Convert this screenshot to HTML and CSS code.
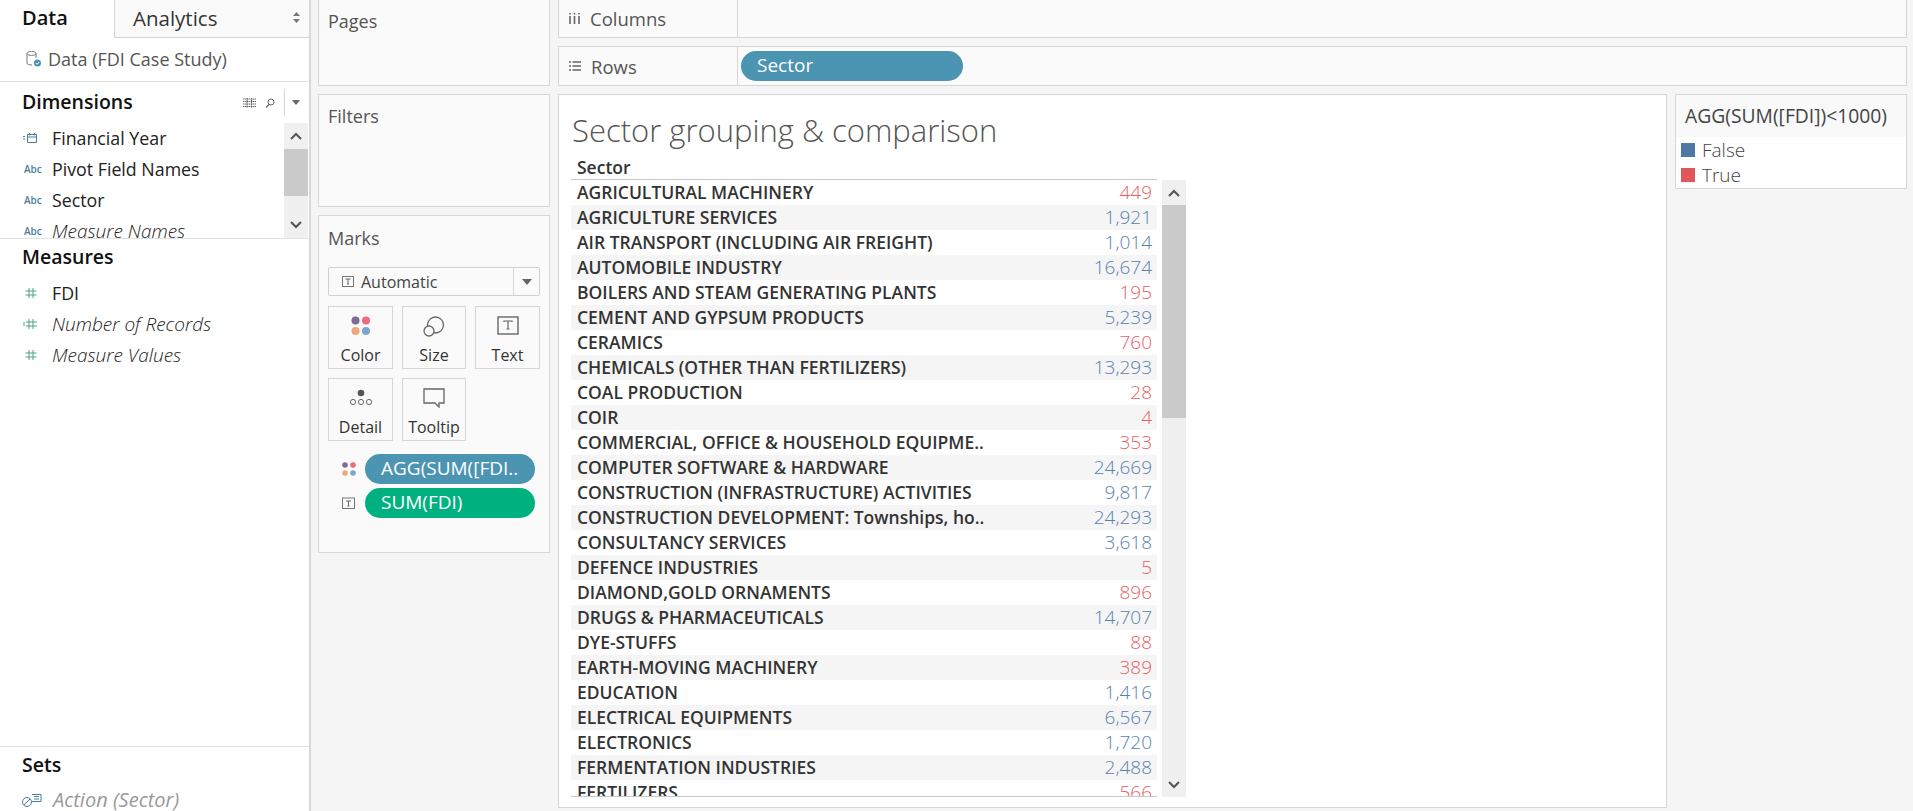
FILE: index.html
```html
<!DOCTYPE html>
<html lang="en">

<head>
    <meta charset="UTF-8">
    <title>Sector grouping &amp; comparison</title>
    <link rel="stylesheet" href="styles.css">
</head>

<body>
    <aside class="sidebar">
        <div class="tabs">
            <div class="tab tab-active">Data</div>
            <div class="tab tab-other">Analytics
                <svg class="tab-arrows" width="7" height="11" viewBox="0 0 7 11"><path d="M3.5 0L7 4H0zM3.5 11L0 7h7z" fill="#777"/></svg>
            </div>
        </div>
        <div class="source">
            <svg width="16" height="18" viewBox="0 0 16 18"><path d="M1 3.5C1 .8 10 .8 10 3.5V8M1 3.5C1 6 10 6 10 3.5M1 3.5V13c0 1.4 2 2 5 2" fill="none" stroke="#777"/><circle cx="11.5" cy="13" r="3.5" fill="#4b93b3"/><path d="M9.800 13l1.300 1.300 2.200-2.400" fill="none" stroke="#fff"/></svg>
            <span>Data (FDI Case Study)</span>
        </div>

        <section class="fields dims">
            <h2>Dimensions</h2>
            <div class="dim-tools">
                <svg width="13" height="10" viewBox="0 0 13 10"><path d="M0 1h13M0 3.5h13M0 6h13M0 8.500h13M4 0v10M8.500 0v10" stroke="#666" stroke-dasharray="1.500 .5"/></svg>
                <svg width="10" height="10" viewBox="0 0 10 10"><circle cx="6" cy="4" r="3" fill="none" stroke="#666"/><path d="M4 6.500L1 9.500" stroke="#666" stroke-width="1.300"/></svg>
                <span class="tools-sep"></span>
                <svg width="8" height="5" viewBox="0 0 8 5"><path d="M0 0h8L4 5z" fill="#666"/></svg>
            </div>
            <div class="field"><svg class="field-icon" width="16" height="12" viewBox="0 0 16 12"><path d="M0 4.500h2M0 7h2M4.500 2.500h9v8h-9zM4.500 5h9M6.500 1v2.500M11.500 1v2.500" fill="none" stroke="#4b7f99"/></svg>Financial Year</div>
            <div class="field"><span class="abc">Abc</span>Pivot Field Names</div>
            <div class="field"><span class="abc">Abc</span>Sector</div>
            <div class="field field-calc"><span class="abc">Abc</span>Measure Names</div>
            <div class="scroll scroll-dims">
                <div class="scroll-btn"><svg width="12" height="8" viewBox="0 0 12 8"><path d="M1 7l5-5 5 5" fill="none" stroke="#555" stroke-width="2"/></svg></div>
                <div class="thumb"></div>
                <div class="scroll-fill"></div>
                <div class="scroll-btn"><svg width="12" height="8" viewBox="0 0 12 8"><path d="M1 1l5 5 5-5" fill="none" stroke="#555" stroke-width="2"/></svg></div>
            </div>
        </section>

        <section class="fields measures">
            <h2>Measures</h2>
            <div class="field"><svg class="field-icon" width="16" height="12" viewBox="0 0 16 12"><path d="M6 1v10M10 1v10M2.500 4h11M2.500 8h11" stroke="#4ca585"/></svg>FDI</div>
            <div class="field field-calc"><svg class="field-icon" width="16" height="12" viewBox="0 0 16 12"><path d="M0 5h2M0 7h2M6 1v10M10 1v10M3 4h11M3 8h11" stroke="#4ca585"/></svg>Number of Records</div>
            <div class="field field-calc"><svg class="field-icon" width="16" height="12" viewBox="0 0 16 12"><path d="M6 1v10M10 1v10M2.500 4h11M2.500 8h11" stroke="#4ca585"/></svg>Measure Values</div>
        </section>

        <section class="fields sets">
            <h2>Sets</h2>
            <div class="field field-calc field-muted"><svg class="field-icon" width="20" height="14" viewBox="0 0 20 14"><circle cx="5" cy="9" r="4.500" fill="none" stroke="#4b7f99"/><path d="M2 12l6-6M10 1.500h9v7h-9M12 3.500h5M12 6h5" fill="none" stroke="#4b7f99"/></svg>Action (Sector)</div>
        </section>
    </aside>

    <div class="cards">
        <div class="card pages"><div class="card-title">Pages</div></div>
        <div class="card filters"><div class="card-title">Filters</div></div>
        <div class="card marks">
            <div class="card-title">Marks</div>
            <div class="mark-select">
                <svg class="t-icon" width="13" height="13" viewBox="0 0 13 13"><rect x=".5" y="1.500" width="11" height="10" fill="none" stroke="#777"/><path d="M3.500 4h5M6 4v5M5 9h2" stroke="#666" fill="none"/></svg>
                <span>Automatic</span>
                <div class="mark-arrow"><svg width="10" height="6" viewBox="0 0 10 6"><path d="M0 0h10L5 6z" fill="#666"/></svg></div>
            </div>
            <div class="mark-buttons">
                <div class="mark-btn">
                    <svg width="20" height="20" viewBox="0 0 20 20"><circle cx="4.500" cy="4.500" r="4" fill="#7f6a96"/><circle cx="15" cy="4.500" r="4" fill="#ee6b7b"/><circle cx="4.500" cy="15" r="4" fill="#f2a67c"/><circle cx="15" cy="15" r="4" fill="#7fa5cf"/></svg>
                    <span>Color</span>
                </div>
                <div class="mark-btn">
                    <svg width="22" height="21" viewBox="0 0 22 21"><circle cx="12.500" cy="9" r="8" fill="none" stroke="#666" stroke-width="1.300"/><circle cx="6" cy="15" r="5" fill="#fafafa" stroke="#666" stroke-width="1.300"/></svg>
                    <span>Size</span>
                </div>
                <div class="mark-btn">
                    <svg width="22" height="19" viewBox="0 0 22 19"><rect x="1" y="1" width="20" height="17" fill="none" stroke="#666" stroke-width="1.400"/><path d="M7 6V5h8v1M11 5v8M9.500 13h3" fill="none" stroke="#666" stroke-width="1.200"/></svg>
                    <span>Text</span>
                </div>
                <div class="mark-btn">
                    <svg width="24" height="20" viewBox="0 0 24 20"><circle cx="12" cy="5" r="3.300" fill="#555"/><circle cx="4" cy="14" r="2.600" fill="none" stroke="#666"/><circle cx="12" cy="14" r="2.600" fill="none" stroke="#666"/><circle cx="20" cy="14" r="2.600" fill="none" stroke="#666"/></svg>
                    <span>Detail</span>
                </div>
                <div class="mark-btn">
                    <svg width="22" height="20" viewBox="0 0 22 20"><path d="M1 1h20v14h-5v4l-4-4H1z" fill="none" stroke="#666" stroke-width="1.300"/></svg>
                    <span>Tooltip</span>
                </div>
            </div>
            <div class="mark-pill">
                <svg width="14" height="14" viewBox="0 0 14 14"><circle cx="3" cy="3" r="2.800" fill="#7f6a96"/><circle cx="11" cy="3" r="2.800" fill="#ee6b7b"/><circle cx="3" cy="11" r="2.800" fill="#f2a67c"/><circle cx="11" cy="11" r="2.800" fill="#7fa5cf"/></svg>
                <div class="pill pill-blue">AGG(SUM([FDI..</div>
            </div>
            <div class="mark-pill">
                <svg width="14" height="13" viewBox="0 0 14 13"><rect x=".5" y="1" width="12" height="10.500" fill="none" stroke="#777"/><path d="M4 4h5M6.500 4v5M5.500 9h2" stroke="#666" fill="none"/></svg>
                <div class="pill pill-green">SUM(FDI)</div>
            </div>
        </div>
    </div>

    <main class="main">
        <div class="shelf shelf-cols">
            <div class="shelf-label">
                <svg width="11" height="11" viewBox="0 0 11 11"><path d="M1 3v8M5.500 3v8M10 3v8M1 0v1.500M5.500 0v1.500M10 0v1.500" stroke="#666" stroke-width="1.600"/></svg>
                Columns
            </div>
        </div>
        <div class="shelf shelf-rows">
            <div class="shelf-label">
                <svg width="12" height="10" viewBox="0 0 12 10"><path d="M0 1h2M0 5h2M0 9h2M3.500 1H12M3.500 5H12M3.500 9H12" stroke="#666" stroke-width="1.400"/></svg>
                Rows
            </div>
            <div class="pill pill-blue pill-rows">Sector</div>
        </div>

        <div class="view-row">
            <div class="viz">
                <div class="viz-title">Sector grouping &amp; comparison</div>
                <div class="table-wrap">
                    <div class="table">
                        <div class="table-head">Sector</div>
                        <div class="table-body">
                            <div class="row"><span>AGRICULTURAL MACHINERY</span><span class="val val-true">449</span></div>
                            <div class="row"><span>AGRICULTURE SERVICES</span><span class="val">1,921</span></div>
                            <div class="row"><span>AIR TRANSPORT (INCLUDING AIR FREIGHT)</span><span class="val">1,014</span></div>
                            <div class="row"><span>AUTOMOBILE INDUSTRY</span><span class="val">16,674</span></div>
                            <div class="row"><span>BOILERS AND STEAM GENERATING PLANTS</span><span class="val val-true">195</span></div>
                            <div class="row"><span>CEMENT AND GYPSUM PRODUCTS</span><span class="val">5,239</span></div>
                            <div class="row"><span>CERAMICS</span><span class="val val-true">760</span></div>
                            <div class="row"><span>CHEMICALS (OTHER THAN FERTILIZERS)</span><span class="val">13,293</span></div>
                            <div class="row"><span>COAL PRODUCTION</span><span class="val val-true">28</span></div>
                            <div class="row"><span>COIR</span><span class="val val-true">4</span></div>
                            <div class="row"><span>COMMERCIAL, OFFICE &amp; HOUSEHOLD EQUIPME..</span><span class="val val-true">353</span></div>
                            <div class="row"><span>COMPUTER SOFTWARE &amp; HARDWARE</span><span class="val">24,669</span></div>
                            <div class="row"><span>CONSTRUCTION (INFRASTRUCTURE) ACTIVITIES</span><span class="val">9,817</span></div>
                            <div class="row"><span>CONSTRUCTION DEVELOPMENT: Townships, ho..</span><span class="val">24,293</span></div>
                            <div class="row"><span>CONSULTANCY SERVICES</span><span class="val">3,618</span></div>
                            <div class="row"><span>DEFENCE INDUSTRIES</span><span class="val val-true">5</span></div>
                            <div class="row"><span>DIAMOND,GOLD ORNAMENTS</span><span class="val val-true">896</span></div>
                            <div class="row"><span>DRUGS &amp; PHARMACEUTICALS</span><span class="val">14,707</span></div>
                            <div class="row"><span>DYE-STUFFS</span><span class="val val-true">88</span></div>
                            <div class="row"><span>EARTH-MOVING MACHINERY</span><span class="val val-true">389</span></div>
                            <div class="row"><span>EDUCATION</span><span class="val">1,416</span></div>
                            <div class="row"><span>ELECTRICAL EQUIPMENTS</span><span class="val">6,567</span></div>
                            <div class="row"><span>ELECTRONICS</span><span class="val">1,720</span></div>
                            <div class="row"><span>FERMENTATION INDUSTRIES</span><span class="val">2,488</span></div>
                            <div class="row"><span>FERTILIZERS</span><span class="val val-true">566</span></div>
                        </div>
                    </div>
                    <div class="scroll scroll-table">
                        <div class="scroll-btn"><svg width="12" height="8" viewBox="0 0 12 8"><path d="M1 7l5-5 5 5" fill="none" stroke="#555" stroke-width="2"/></svg></div>
                        <div class="thumb"></div>
                        <div class="scroll-fill"></div>
                        <div class="scroll-btn"><svg width="12" height="8" viewBox="0 0 12 8"><path d="M1 1l5 5 5-5" fill="none" stroke="#555" stroke-width="2"/></svg></div>
                    </div>
                </div>
            </div>

            <div class="legend">
                <div class="legend-title">AGG(SUM([FDI])&lt;1000)</div>
                <div class="legend-item"><span class="swatch swatch-false"></span>False</div>
                <div class="legend-item"><span class="swatch swatch-true"></span>True</div>
            </div>
        </div>
    </main>
</body>

</html>
```
FILE: styles.css
```css
* {
    box-sizing: border-box;
}

html,
body {
    height: 811px;
}

body {
    margin: 0;
    display: flex;
    overflow: hidden;
    font-family: "Open Sans", "Liberation Sans", sans-serif;
    color: #333;
    background-color: #f5f5f5;
}

/* left data pane */
.sidebar {
    width: 311px;
    flex-shrink: 0;
    display: flex;
    flex-direction: column;
    background-color: #fff;
    border-right: 2px solid #d8d8d8;
}

.tabs {
    display: flex;
    height: 38px;
}

.tab {
    font-size: 20px;
    line-height: 36px;
}

.tab-active {
    width: 114px;
    padding-left: 22px;
    font-weight: 600;
    color: #111;
}

.tab-other {
    flex: 1;
    position: relative;
    padding-left: 18px;
    font-size: 20.5px;
    background-color: #fafafa;
    border-left: 1px solid #d4d4d4;
    border-bottom: 1px solid #d4d4d4;
}

.tab-arrows {
    position: absolute;
    right: 9px;
    top: 12px;
}

.source {
    height: 44px;
    display: flex;
    align-items: center;
    gap: 6px;
    padding-left: 26px;
    padding-bottom: 2px;
    font-size: 18px;
    color: #555;
    border-bottom: 1px solid #e2e2e2;
}

.fields h2 {
    margin: 0 0 0 22px;
    font-size: 19.5px;
    font-weight: 600;
    line-height: 24px;
    color: #111;
}

.dims {
    position: relative;
    height: 157px;
    padding-top: 8px;
    overflow: hidden;
    border-bottom: 1px solid #e2e2e2;
}

.dim-tools {
    position: absolute;
    top: 7px;
    right: 4px;
    height: 27px;
    display: flex;
    align-items: center;
    gap: 9px;
}

.tools-sep {
    width: 1px;
    height: 27px;
    background-color: #d4d4d4;
}

.dim-tools svg:last-child {
    margin: 0 5px 0 -2px;
}

.field {
    height: 31px;
    display: flex;
    align-items: center;
    font-size: 17.8px;
    color: #222;
    white-space: nowrap;
}

.dims h2 {
    margin-bottom: 8px;
}

.field-calc {
    font-size: 19px;
    font-style: italic;
    font-weight: 300;
}

.field-muted {
    font-size: 20px;
    font-weight: 400;
    color: #999;
}

.field-icon {
    margin-left: 23px;
    margin-right: 13px;
    flex-shrink: 0;
}

.abc {
    width: 52px;
    padding-left: 24px;
    font-size: 10px;
    font-weight: 600;
    font-style: normal;
    color: #4b7f99;
}

.measures {
    flex: 1;
    padding-top: 6px;
}

.measures h2 {
    margin-bottom: 8px;
}

.sets {
    height: 65px;
    padding-top: 6px;
    border-top: 1px solid #e2e2e2;
}

.sets h2 {
    margin-bottom: 7px;
}

.sets .field-icon {
    margin-left: 22px;
    margin-right: 11px;
}

/* scrollbars */
.scroll {
    display: flex;
    flex-direction: column;
    width: 24px;
    background-color: #f0f0f0;
}

.scroll-dims {
    position: absolute;
    right: 1px;
    top: 41px;
    height: 115px;
}

.scroll-btn {
    height: 26px;
    display: flex;
    align-items: center;
    justify-content: center;
}

.thumb {
    background-color: #cacaca;
}

.scroll-dims .thumb {
    height: 47px;
}

.scroll-fill {
    flex: 1;
}

/* pages, filters, marks */
.cards {
    width: 232px;
    flex-shrink: 0;
    margin-left: 7px;
    display: flex;
    flex-direction: column;
    gap: 8px;
}

.card {
    background-color: #fafafa;
    border: 1px solid #d6d6d6;
}

.card-title {
    padding: 10px 9px 0;
    font-size: 18px;
    line-height: 22px;
    color: #555;
}

.pages {
    height: 86px;
    border-top: 0;
}

.filters {
    height: 113px;
}

.marks {
    height: 338px;
}

.marks .card-title {
    padding-top: 11px;
}

.mark-select {
    margin: 18px 9px 10px;
    height: 29px;
    display: flex;
    align-items: center;
    font-size: 16px;
    color: #444;
    border: 1px solid #d0d0d0;
    border-radius: 2px;
}

.mark-select .t-icon {
    margin: 0 6px 0 13px;
}

.mark-select span {
    flex: 1;
}

.mark-arrow {
    width: 26px;
    height: 100%;
    display: flex;
    align-items: center;
    justify-content: center;
    border-left: 1px solid #d8d8d8;
}

.mark-buttons {
    margin: 0 9px;
    display: grid;
    grid-template-columns: 65px 64px 65px;
    grid-auto-rows: 63px;
    column-gap: 9px;
    row-gap: 9px;
}

.mark-btn {
    display: flex;
    flex-direction: column;
    align-items: center;
    justify-content: space-between;
    padding: 9px 0 3px;
    font-size: 16px;
    line-height: 20px;
    color: #333;
    border: 1px solid #d6d6d6;
}

.mark-pill {
    display: flex;
    align-items: center;
    gap: 9px;
    margin: 0 14px 4px 23px;
}

.mark-buttons + .mark-pill {
    margin-top: 13px;
}

.mark-pill svg {
    flex-shrink: 0;
}

.pill {
    height: 30px;
    padding-left: 16px;
    flex: 1;
    font-size: 19px;
    line-height: 29px;
    color: #fff;
    border-radius: 15px;
}

.pill-blue {
    background-color: #4b94b2;
}

.pill-green {
    background-color: #00b180;
}

/* shelves and view */
.main {
    flex: 1;
    margin: 0 6px 0 8px;
    min-width: 0;
    display: flex;
    flex-direction: column;
}

.shelf {
    display: flex;
    align-items: center;
    background-color: #fafafa;
    border: 1px solid #d6d6d6;
}

.shelf-cols {
    height: 38px;
    border-top: 0;
}

.shelf-rows {
    height: 40px;
    margin-top: 8px;
}

.shelf-label {
    width: 179px;
    height: 100%;
    flex-shrink: 0;
    display: flex;
    align-items: center;
    gap: 10px;
    padding-left: 10px;
    font-size: 18.5px;
    color: #555;
    border-right: 1px solid #d6d6d6;
}

.pill-rows {
    flex: none;
    width: 222px;
    margin-left: 3px;
}

.view-row {
    flex: 1;
    display: flex;
    gap: 8px;
    margin-top: 8px;
    margin-bottom: 3px;
    min-height: 0;
}

.viz {
    width: 1109px;
    padding: 15px 0 0 12px;
    overflow: hidden;
    background-color: #fff;
    border: 1px solid #d6d6d6;
}

.viz-title {
    height: 48px;
    padding-left: 1px;
    font-size: 31px;
    font-weight: 300;
    line-height: 40px;
    white-space: nowrap;
    color: #555;
}

.table-wrap {
    display: flex;
    gap: 5px;
}

.table {
    width: 586px;
}

.table-head {
    height: 22px;
    padding-left: 6px;
    font-size: 17.5px;
    font-weight: 600;
    line-height: 18px;
    color: #333;
    border-bottom: 1px solid #c8c8c8;
}

.table-body {
    height: 617px;
    overflow: hidden;
    border-bottom: 1px solid #c8c8c8;
}

.row {
    height: 25px;
    display: flex;
    justify-content: space-between;
    padding: 0 5px 0 6px;
    font-size: 17.5px;
    font-weight: 600;
    line-height: 25px;
    white-space: nowrap;
    color: #333;
}

.row:nth-child(even) {
    background-color: #f5f5f5;
}

.val {
    font-size: 19px;
    font-weight: 300;
    color: #5a82b1;
}

.val-true {
    color: #e55f66;
}

.scroll-table {
    margin-top: 22px;
    height: 617px;
}

.scroll-table .scroll-btn {
    height: 25px;
}

.scroll-table .thumb {
    height: 213px;
}

/* legend */
.legend {
    width: 232px;
    height: 95px;
    background-color: #fff;
    border: 1px solid #d6d6d6;
}

.legend-title {
    height: 42px;
    padding: 10px 0 0 9px;
    font-size: 19.3px;
    line-height: 22px;
    white-space: nowrap;
    color: #444;
    background-color: #f9f9f9;
}

.legend-item {
    height: 25px;
    display: flex;
    align-items: center;
    gap: 7px;
    padding-left: 5px;
    font-size: 19px;
    font-weight: 300;
    color: #444;
}

.swatch {
    width: 14px;
    height: 14px;
}

.swatch-false {
    background-color: #4e79a7;
}

.swatch-true {
    background-color: #e15759;
}
```
